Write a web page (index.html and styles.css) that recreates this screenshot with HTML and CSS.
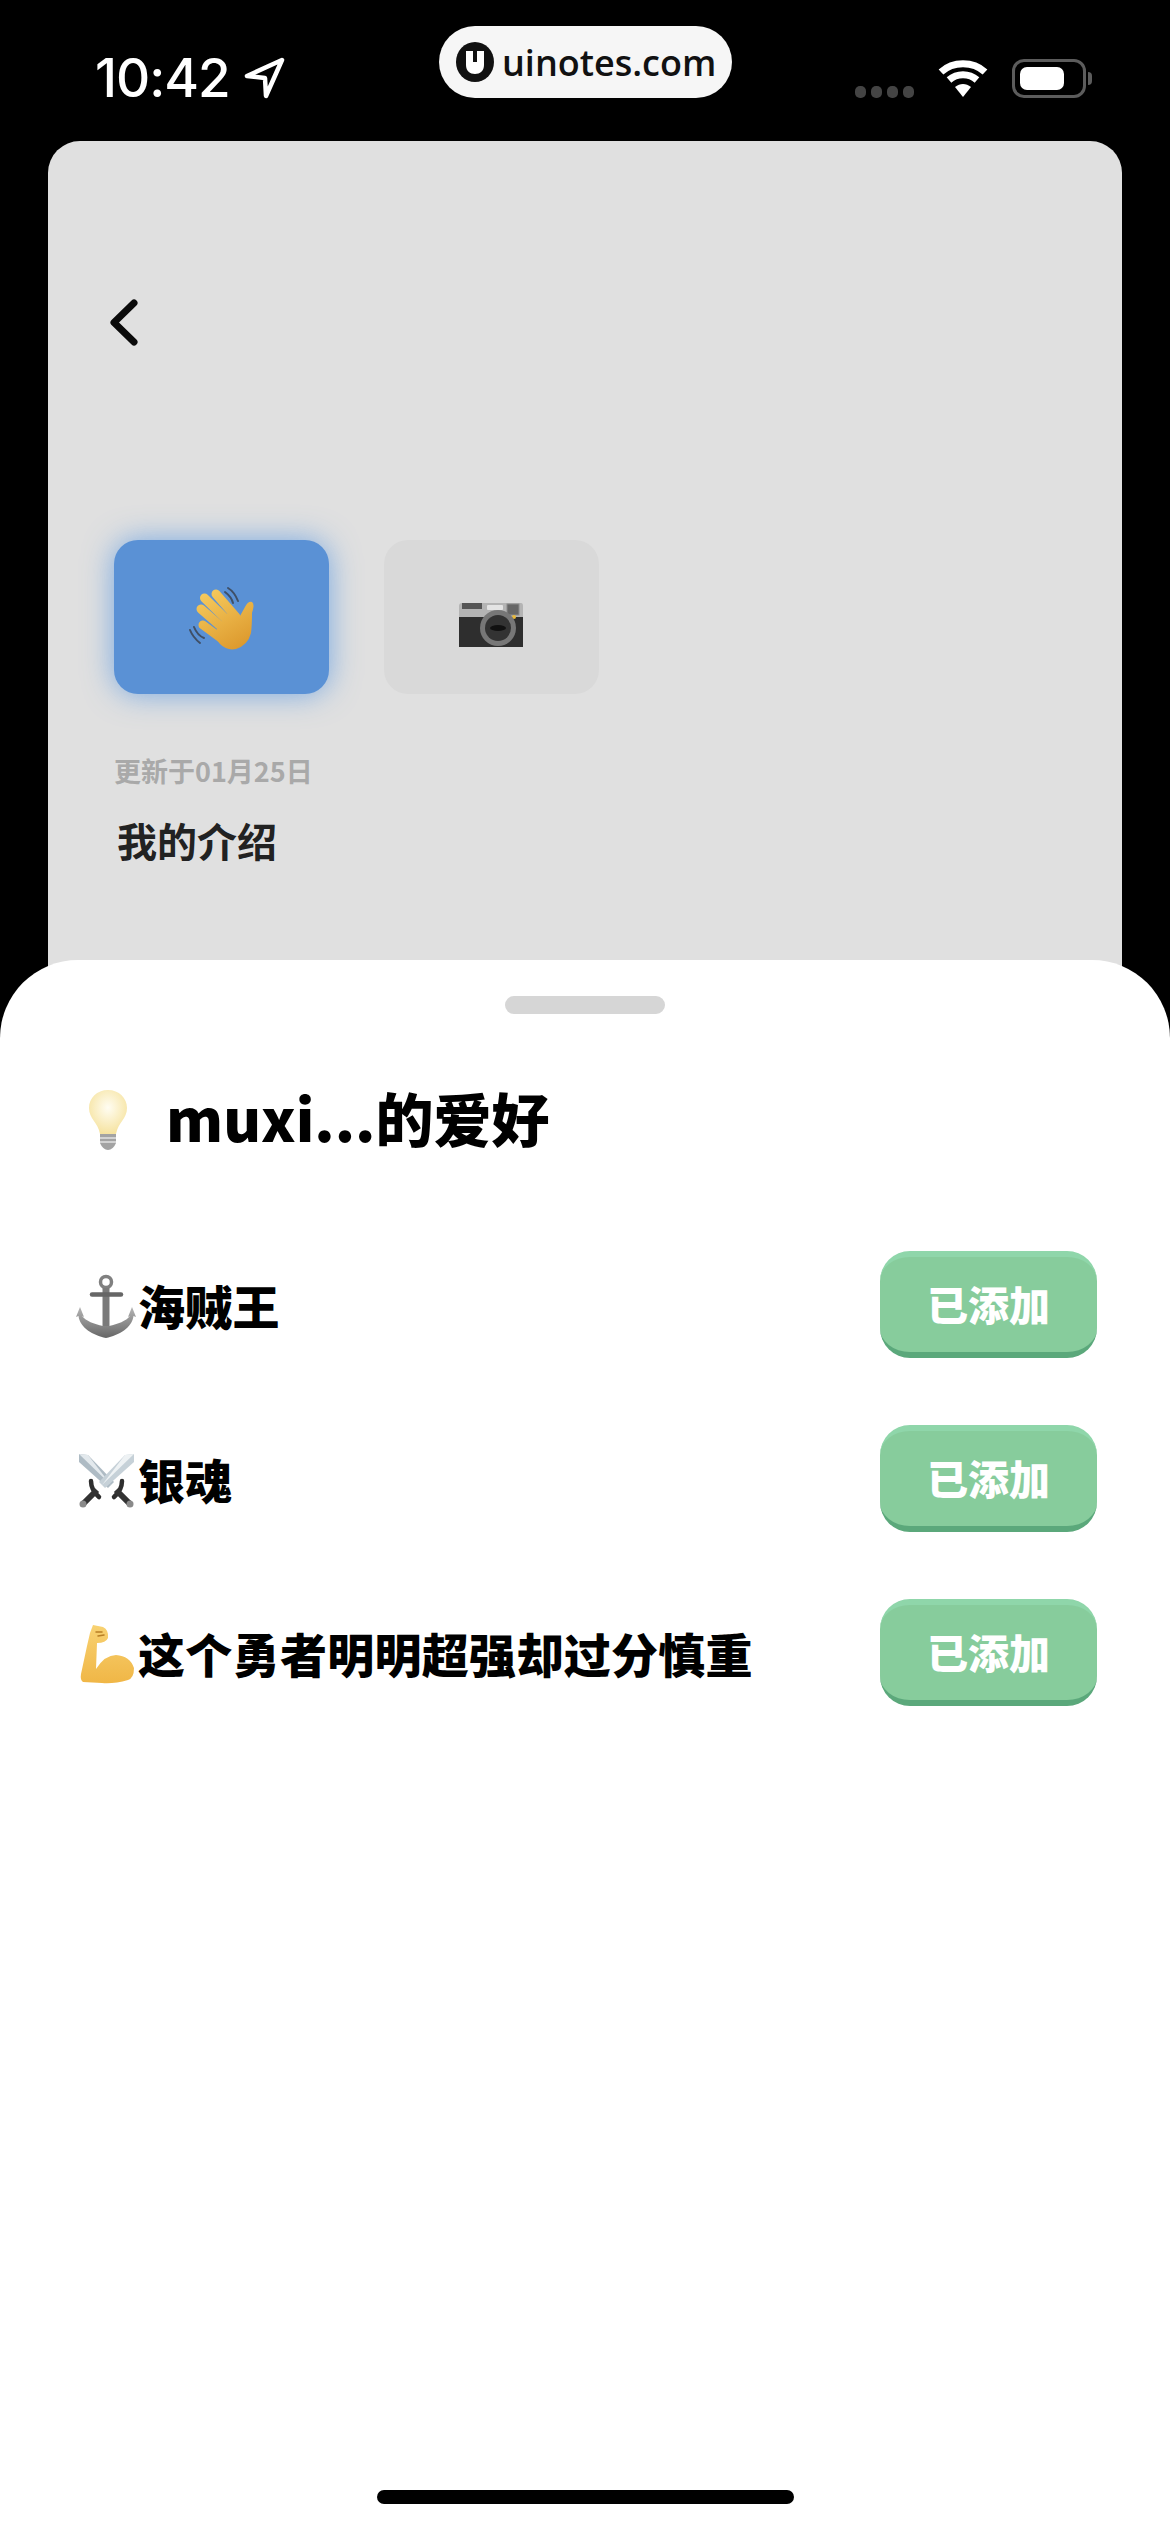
FILE: index.html
```html
<!DOCTYPE html>
<html lang="zh-CN">
<head>
    <meta charset="UTF-8">
    <meta name="viewport" content="width=device-width, initial-scale=1.0">
    <title>我的介绍</title>
    <link rel="stylesheet" href="styles.css">
</head>
<body>
    <header class="status-bar">
        <div class="status-left">
            <span class="time">10:42</span>
            <svg class="arrow" width="42" height="42" viewBox="0 0 42 42"><path d="M39 3 4 19 22 21 23 39Z" fill="none" stroke="#fff" stroke-width="4.500" stroke-linejoin="round"/></svg>
        </div>
        <div class="status-right">
            <div class="signal"><i></i><i></i><i></i><i></i></div>
            <svg class="wifi" width="50" height="40" viewBox="0 0 50 40">
                <path d="M3 14C15 3 35 3 47 14" fill="none" stroke="#fff" stroke-width="7"/>
                <path d="M11 22C19 15 31 15 39 22" fill="none" stroke="#fff" stroke-width="7"/>
                <path d="M17 29C22 25 28 25 33 29L25 39Z" fill="#fff"/>
            </svg>
            <div class="battery"><div class="battery-fill"></div></div>
            <div class="battery-nub"></div>
        </div>
    </header>

    <!-- watermark over the status bar -->
    <div class="watermark">
        <svg width="38" height="40" viewBox="0 0 38 40">
            <ellipse cx="19" cy="20" rx="19" ry="20" fill="#111"/>
            <path d="M10 9H17V20H21V9H28V23C28 29 24 32 19 32C14 32 10 29 10 23Z" fill="#fff"/>
        </svg>
        <span>uinotes.com</span>
    </div>

    <main class="card">
        <svg class="back" width="70" height="80" viewBox="0 0 70 80"><path d="M44 23 24 42.500 44 62" fill="none" stroke="#0a0a0a" stroke-width="7" stroke-linecap="round" stroke-linejoin="round"/></svg>

        <div class="tiles">
            <div class="tile tile-active">
                <svg class="hand" width="90" height="90" viewBox="0 0 90 90">
                    <defs>
                        <linearGradient id="handFill" gradientUnits="userSpaceOnUse" x1="25" y1="15" x2="60" y2="75">
                            <stop offset="0" stop-color="#f6cb5e"/>
                            <stop offset="1" stop-color="#dc982c"/>
                        </linearGradient>
                    </defs>
                    <g fill="none" stroke="#3f4f66" stroke-width="2" stroke-linecap="round">
                        <path d="M48 13C53 16 56 21 58 26"/>
                        <path d="M45 17C49 20 52 24 53 28"/>
                        <path d="M10 55C12 60 15 64 20 68"/>
                        <path d="M14 52C16 57 19 61 24 63"/>
                    </g>
                    <g stroke="url(#handFill)" stroke-width="9" stroke-linecap="round">
                        <path d="M36 19 56 42"/>
                        <path d="M24.500 23 48 46"/>
                        <path d="M21 34 44 54"/>
                        <path d="M23 50 42 64"/>
                    </g>
                    <path d="M48 38 60 41 65 32Q68 26 72 27 75 29 72 38 72 50 71 58 68 70 56 74 47 76 40 69L33 60Z" fill="url(#handFill)"/>
                </svg>
            </div>
            <div class="tile">
                <svg class="camera" width="85" height="70" viewBox="0 0 85 70">
                    <path d="M9 16Q9 13 12 13H71Q73 13 73 16V28H9Z" fill="#b4b4b4"/>
                    <rect x="9" y="27" width="64" height="30" fill="#2e2e2e"/>
                    <rect x="12" y="13" width="20" height="6" fill="#555"/>
                    <rect x="37" y="15" width="16" height="5" rx="1" fill="#e4e4e4"/>
                    <rect x="57" y="14" width="12" height="11" fill="#666" stroke="#8a8a8a"/>
                    <circle cx="64" cy="27" r="2" fill="#e8b93a"/>
                    <circle cx="48" cy="38" r="18" fill="#777"/>
                    <circle cx="48" cy="38" r="13" fill="#333"/>
                    <ellipse cx="48" cy="38" rx="8" ry="3" fill="#111"/>
                </svg>
            </div>
        </div>

        <p class="updated">更新于01月25日</p>
        <h2 class="intro">我的介绍</h2>
    </main>

    <section class="sheet">
        <div class="handle"></div>

        <div class="sheet-title">
            <svg class="bulb" width="38" height="60" viewBox="0 0 38 60">
                <defs>
                    <radialGradient id="bulbGlow" cx="0.5" cy="0.4" r="0.6">
                        <stop offset="0" stop-color="#fffdf2"/>
                        <stop offset="1" stop-color="#f6e3a0"/>
                    </radialGradient>
                </defs>
                <path d="M19 0C8 0 0 8 0 18 0 29 9 32 11 44H27C29 32 38 29 38 18 38 8 30 0 19 0Z" fill="url(#bulbGlow)"/>
                <path d="M11 44H27V53Q24 60 19 60 14 60 11 53Z" fill="#a3a3a3"/>
                <path d="M11 48H27M11 52H27" stroke="#e2e2e2" stroke-width="1.500"/>
            </svg>
            <h1>muxi...的爱好</h1>
        </div>

        <ul class="hobby-list">
            <li class="hobby">
                <div class="hobby-name">
                    <svg width="67" height="75" viewBox="0 0 67 75">
                        <defs>
                            <linearGradient id="steel" x1="0" y1="0" x2="0" y2="1">
                                <stop offset="0" stop-color="#b5b5b5"/>
                                <stop offset="1" stop-color="#666"/>
                            </linearGradient>
                        </defs>
                        <circle cx="36" cy="12" r="5.500" fill="none" stroke="#808080" stroke-width="3.500"/>
                        <path d="M36 18V64" stroke="#7a7a7a" stroke-width="7"/>
                        <path d="M22 24.500H51" stroke="#666" stroke-width="4.500" stroke-linecap="round"/>
                        <path d="M10 37 14 47 12 46C16 51 24 54 33 56H39C48 54 56 51 60 46L58 47 62 37 66 47 63.500 46C62 58 49 65 36 68 23 65 10 58 8.500 46L6 47Z" fill="url(#steel)"/>
                    </svg>
                    <span>海贼王</span>
                </div>
                <button class="added-btn">已添加</button>
            </li>
            <li class="hobby">
                <div class="hobby-name">
                    <svg width="67" height="75" viewBox="0 0 67 75">
                        <path d="M9 10 18 11 44 38 38 44 9 18Z" fill="#aebbc4"/>
                        <path d="M9 10 18 11 41 41Z" fill="#e3e9ed"/>
                        <path d="M64 10 55 11 29 38 35 44 64 18Z" fill="#c6d1d8"/>
                        <path d="M64 10 55 11 32 41Z" fill="#eef2f4"/>
                        <path d="M21 37Q21 46 29 53M52 37Q52 46 44 53" fill="none" stroke="#2e2e2e" stroke-width="4.500" stroke-linecap="round"/>
                        <path d="M27 46 14 59M46 46 59 59" stroke="#333" stroke-width="6"/>
                        <circle cx="13" cy="60" r="3.500" fill="#8a8a8a"/>
                        <circle cx="60" cy="60" r="3.500" fill="#8a8a8a"/>
                    </svg>
                    <span>银魂</span>
                </div>
                <button class="added-btn">已添加</button>
            </li>
            <li class="hobby">
                <div class="hobby-name">
                    <svg width="67" height="75" viewBox="0 0 67 75">
                        <defs>
                            <linearGradient id="armFill" x1="0" y1="0" x2="0" y2="1">
                                <stop offset="0" stop-color="#f8d272"/>
                                <stop offset="1" stop-color="#f0b646"/>
                            </linearGradient>
                        </defs>
                        <path d="M23 7 33 9Q39 12 38 20 36 25 27 25L26 51Q35 37 46 37 60 38 64 50 64 60 58 62 44 66 32 65L13 64Q10 62 11 56L17 28 20 15Z" fill="url(#armFill)"/>
                        <path d="M26 14 32 14M28 18 34 17" stroke="#b97f25" stroke-width="1.500" stroke-linecap="round"/>
                    </svg>
                    <span>这个勇者明明超强却过分慎重</span>
                </div>
                <button class="added-btn">已添加</button>
            </li>
        </ul>

        <div class="home-indicator"></div>
    </section>
</body>
</html>
```

FILE: styles.css
```css
/* General Reset */
* {
    margin: 0;
    padding: 0;
    box-sizing: border-box;
}

body {
    width: 1170px;
    height: 2532px;
    overflow: hidden;
    position: relative;
    background: #000;
    font-family: "Noto Sans CJK SC", "Noto Sans", sans-serif;
}

svg {
    display: block;
    flex-shrink: 0;
}

/* Status bar */
.status-bar {
    height: 141px;
    padding: 52px 78px 0 95px;
    display: flex;
    justify-content: space-between;
    align-items: flex-start;
    color: #fff;
}

.status-left {
    display: flex;
    align-items: center;
    gap: 13px;
}

.time {
    font-family: Inter, sans-serif;
    font-size: 53px;
    font-weight: 500;
    line-height: 52px;
    letter-spacing: -1px;
}

.status-right {
    display: flex;
    align-items: center;
    margin-top: 6px;
}

.signal {
    display: flex;
    gap: 5px;
    margin: 28px 24px 0 0;
}

.signal i {
    width: 11px;
    height: 12px;
    border-radius: 5px;
    background: #444;
}

.wifi {
    margin-right: 24px;
}

.battery {
    width: 74px;
    height: 39px;
    padding: 5px;
    border: 3px solid #5c5c5c;
    border-radius: 12px;
}

.battery-fill {
    width: 44px;
    height: 100%;
    background: #fff;
    border-radius: 7px;
}

.battery-nub {
    width: 4px;
    height: 13px;
    margin-left: 2px;
    background: #5c5c5c;
    border-radius: 0 4px 4px 0;
}

.watermark {
    position: absolute;
    top: 26px;
    left: 439px;
    width: 293px;
    height: 72px;
    padding-left: 17px;
    display: flex;
    align-items: center;
    gap: 8px;
    background: #f6f6f6;
    border-radius: 36px;
    color: #111;
    font-family: "Open Sans", sans-serif;
    font-size: 36px;
    font-weight: 600;
}

/* Page behind the sheet */
.card {
    height: 900px;
    margin: 0 48px;
    padding: 139px 66px 0;
    background: #e0e0e0;
    border-radius: 32px 32px 0 0;
}

.back {
    margin-left: -24px;
}

.tiles {
    margin-top: 180px;
    display: flex;
    gap: 55px;
}

.tile {
    width: 215px;
    height: 154px;
    display: flex;
    align-items: center;
    justify-content: center;
    background: #d9d9d9;
    border-radius: 24px;
}

.tile-active {
    background: #5a91d5;
    box-shadow: 0 0 30px rgba(74, 144, 226, 0.7);
}

.hand {
    margin: 6px 0 0 7px;
}

.camera {
    margin: 16px 0 0 2px;
}

.updated {
    margin-top: 59px;
    font-size: 27px;
    font-weight: 700;
    line-height: 36px;
    color: #a9a9a9;
}

.intro {
    margin: 21px 0 0 3px;
    font-size: 40px;
    font-weight: 700;
    line-height: 60px;
    color: #222;
}

/* Bottom sheet */
.sheet {
    position: absolute;
    top: 960px;
    left: 0;
    right: 0;
    bottom: 0;
    display: flex;
    flex-direction: column;
    padding-top: 36px;
    background: #fff;
    border-radius: 78px 78px 0 0;
}

.handle {
    width: 160px;
    height: 18px;
    margin: 0 auto;
    background: #d6d6d6;
    border-radius: 9px;
}

.sheet-title {
    height: 80px;
    margin-top: 66px;
    padding-left: 89px;
    display: flex;
    align-items: center;
    gap: 39px;
}

.sheet-title h1 {
    margin-bottom: 6px;
    font-size: 58px;
    font-weight: 900;
    line-height: 80px;
    color: #000;
}

.hobby-list {
    margin-top: 91px;
    padding: 0 73px 0 70px;
    list-style: none;
    display: flex;
    flex-direction: column;
    gap: 67px;
}

.hobby {
    display: flex;
    align-items: center;
    justify-content: space-between;
}

.hobby-name {
    display: flex;
    align-items: center;
    margin-top: 6px;
    font-size: 47px;
    font-weight: 900;
    letter-spacing: 0.300px;
    color: #000;
}

.hobby-name span {
    margin: 0 0 6px 1px;
}

.added-btn {
    width: 217px;
    height: 107px;
    padding-bottom: 3px;
    border: none;
    border-top: 6px solid #8fd6aa;
    border-bottom: 6px solid #5ba87b;
    border-radius: 30px;
    background: #87cc9c;
    color: #fff;
    font-family: inherit;
    font-size: 41px;
    font-weight: 900;
}

.home-indicator {
    width: 417px;
    height: 14px;
    margin: auto auto 28px;
    background: #000;
    border-radius: 7px;
}
```
